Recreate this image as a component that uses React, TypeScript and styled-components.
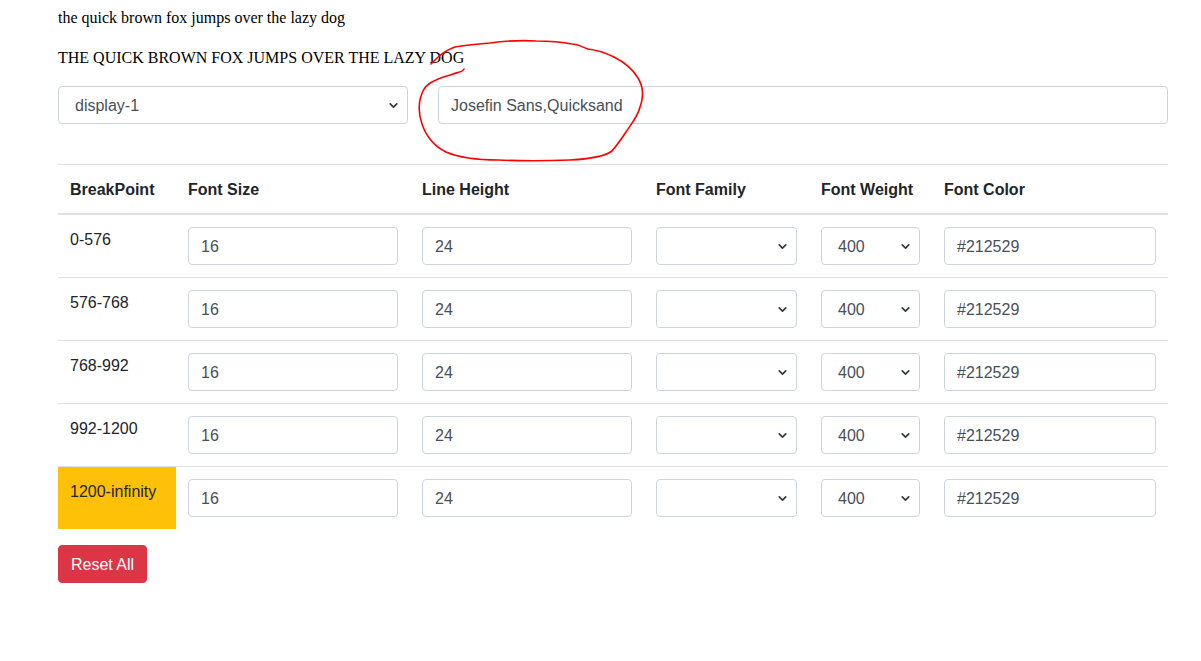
import React from "react";
import styled, { createGlobalStyle } from "styled-components";
import { ChevronDown } from "lucide-react";

const GlobalStyle = createGlobalStyle`
  html, body {
    margin: 0;
    padding: 0;
    background: #fff;
  }
  body {
    font-family: "Liberation Sans", Arial, sans-serif;
    color: #212529;
  }
  * {
    box-sizing: border-box;
  }
`;

const breakpoints = ["0-576", "576-768", "768-992", "992-1200", "1200-infinity"];
const columns = [
  { label: "BreakPoint", width: 118 },
  { label: "Font Size", width: 234 },
  { label: "Line Height", width: 234 },
  { label: "Font Family", width: 165 },
  { label: "Font Weight", width: 123 },
  { label: "Font Color", width: 236 },
];

const Select = ({ value, children }: { value?: string; children?: React.ReactNode }) => (
  <SelectWrap>
    <NativeSelect defaultValue={value}>{children}</NativeSelect>
    <Chevron size={13} strokeWidth={3.2} />
  </SelectWrap>
);

const App = () => {
  return (
    <Page>
      <GlobalStyle />
      <Sample>the quick brown fox jumps over the lazy dog</Sample>
      <Sample>THE QUICK BROWN FOX JUMPS OVER THE LAZY DOG</Sample>

      <Controls>
        <Select value="display-1">
          <option>display-1</option>
        </Select>
        <Input defaultValue="Josefin Sans,Quicksand" />
      </Controls>

      <Table>
        <colgroup>
          {columns.map((c) => (
            <col key={c.label} style={{ width: c.width }} />
          ))}
        </colgroup>
        <thead>
          <tr>
            {columns.map((c) => (
              <Th key={c.label}>{c.label}</Th>
            ))}
          </tr>
        </thead>
        <tbody>
          {breakpoints.map((bp) => (
            <tr key={bp}>
              <Td $active={bp === "1200-infinity"}>{bp}</Td>
              <Td>
                <Input defaultValue="16" />
              </Td>
              <Td>
                <Input defaultValue="24" />
              </Td>
              <Td>
                <Select>
                  <option></option>
                </Select>
              </Td>
              <Td>
                <Select value="400">
                  <option>400</option>
                </Select>
              </Td>
              <Td>
                <Input defaultValue="#212529" />
              </Td>
            </tr>
          ))}
        </tbody>
      </Table>

      <ResetButton>Reset All</ResetButton>

      <Scribble viewBox="0 0 1201 661" aria-hidden>
        <path
          d="M464 69 C462 73 457 72 453 74 C448 76 442 77 436 80 C428 83 423 88 421 96 C418 105 419 115 422 124 C426 136 434 146 446 152 C460 158 478 160 498 160 C520 161 545 161 570 160 C590 159 604 157 612 151 C618 144 622 138 626 132 C632 123 638 116 640 107 C644 96 643 86 638 78 C632 68 624 62 614 57 C604 52 596 50 588 49 C582 47 578 44 572 44 C562 42 550 41 536 41 C520 40 505 41 490 43 C478 44 466 45 455 47 C446 50 440 55 436 59 C434 61 432 63 431 64"
          fill="none"
          stroke="#f00"
          strokeWidth={1.6}
          strokeLinecap="round"
          strokeLinejoin="round"
        />
      </Scribble>
    </Page>
  );
};

const Page = styled.div`
  position: relative;
  width: 1201px;
  min-height: 661px;
  padding: 6px 33px 0 58px;
`;

const Sample = styled.p`
  margin: 0 0 16px 0;
  font-family: "Liberation Serif", "Times New Roman", serif;
  font-size: 16px;
  line-height: 24px;
  color: #000;
`;

const Controls = styled.div`
  display: grid;
  grid-template-columns: 350px 730px;
  column-gap: 30px;
  margin-bottom: 40px;
`;

const SelectWrap = styled.div`
  position: relative;
  width: 100%;
`;

const NativeSelect = styled.select`
  appearance: none;
  width: 100%;
  height: 38px;
  padding: 7px 28px 5px 16px;
  font-family: "Liberation Sans", Arial, sans-serif;
  font-size: 16px;
  line-height: 24px;
  color: #495057;
  background: #fff;
  border: 1px solid #ced4da;
  border-radius: 4px;
  outline: none;
`;

const Chevron = styled(ChevronDown)`
  position: absolute;
  right: 8px;
  top: 13px;
  color: #343a40;
  pointer-events: none;
`;

const Input = styled.input`
  display: block;
  width: 100%;
  height: 38px;
  padding: 7px 12px 5px 12px;
  font-family: "Liberation Sans", Arial, sans-serif;
  font-size: 16px;
  line-height: 24px;
  color: #495057;
  background: #fff;
  border: 1px solid #ced4da;
  border-radius: 4px;
  outline: none;
`;

const Table = styled.table`
  width: 1110px;
  table-layout: fixed;
  border-collapse: collapse;
  margin-bottom: 16px;
  font-size: 16px;
  line-height: 24px;
  color: #212529;
`;

const Th = styled.th`
  text-align: left;
  font-weight: 700;
  font-size: 16px;
  padding: 13px 12px 11px 12px;
  border-top: 1px solid #dee2e6;
  border-bottom: 2px solid #dee2e6;
  vertical-align: bottom;
`;

const Td = styled.td<{ $active?: boolean }>`
  padding: 13px 12px 11px 12px;
  border-top: 1px solid #dee2e6;
  vertical-align: top;
  background: ${({ $active }) => ($active ? "#ffc107" : "transparent")};

  & > input,
  & > div {
    margin-top: -1px;
    margin-bottom: 1px;
  }
`;

const ResetButton = styled.button`
  display: inline-block;
  height: 38px;
  padding: 7px 12px 5px 12px;
  font-family: "Liberation Sans", Arial, sans-serif;
  font-size: 16px;
  line-height: 24px;
  color: #fff;
  background: #dc3545;
  border: 1px solid #dc3545;
  border-radius: 4px;
`;

const Scribble = styled.svg`
  position: absolute;
  left: 0;
  top: 0;
  width: 1201px;
  height: 661px;
  pointer-events: none;
`;

export default App;
